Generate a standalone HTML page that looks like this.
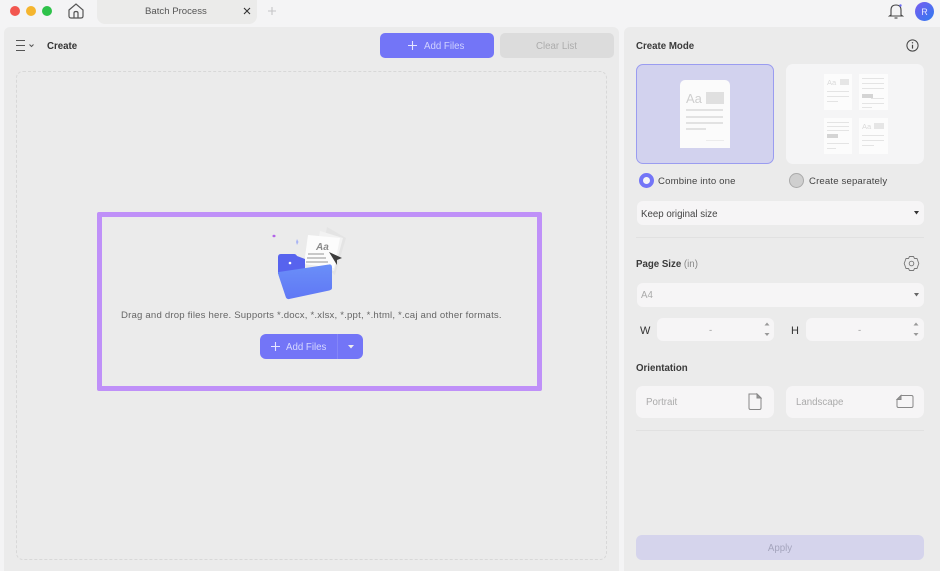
<!DOCTYPE html>
<html><head><meta charset="utf-8"><style>
*{box-sizing:border-box}
html,body{margin:0;padding:0;width:940px;height:571px;overflow:hidden;background:#f4f4f5;font-family:"Liberation Sans",sans-serif;color:#333}
#w{position:absolute;left:0;top:0;width:940px;height:571px;filter:blur(.3px)}
.a{position:absolute}
.t{position:absolute;white-space:nowrap;line-height:14px;margin-top:1px}
.b{font-weight:bold}
.field{position:absolute;background:#f6f5f6;border-radius:6px}
</style></head><body><div id="w">
<!-- title bar -->
<div class="a" style="left:10px;top:6px;width:10px;height:10px;border-radius:50%;background:#f2564f"></div>
<div class="a" style="left:26px;top:6px;width:10px;height:10px;border-radius:50%;background:#f5b52e"></div>
<div class="a" style="left:42px;top:6px;width:10px;height:10px;border-radius:50%;background:#2ec24a"></div>
<svg class="a" style="left:67px;top:2px" width="18" height="18" viewBox="0 0 18 18" fill="none" stroke="#555" stroke-width="1.2"><path d="M2 8 L9 2 L16 8 V14 Q16 16 14 16 H4 Q2 16 2 14 Z"/><path d="M7 16 V11 Q7 9.5 9 9.5 Q11 9.5 11 11 V16"/></svg>
<div class="a" style="left:97px;top:0;width:160px;height:24px;background:#ebebea;border-radius:0 0 8px 8px"></div>
<div class="t" style="left:145px;top:4px;font-size:9.6px;color:#555">Batch Process</div>
<svg class="a" style="left:243px;top:7px" width="8" height="8" fill="none" stroke="#333" stroke-width="1.1"><path d="M1 1 L7 7 M7 1 L1 7"/></svg>
<svg class="a" style="left:267px;top:6px" width="10" height="10" fill="none" stroke="#c4c4c6" stroke-width="1.1"><path d="M5 1 V9 M1 5 H9"/></svg>
<svg class="a" style="left:888px;top:2px" width="16" height="18" viewBox="0 0 16 18" fill="none" stroke="#444" stroke-width="1.1"><path d="M3 13 V8 Q3 3 8 3 Q13 3 13 8 V13 L14.5 14 H1.5 Z"/><path d="M6.5 16 H9.5"/><circle cx="12.5" cy="3.5" r="1.2" fill="#6c6cf5" stroke="none"/></svg>
<div class="a" style="left:915px;top:2px;width:19px;height:19px;border-radius:50%;background:linear-gradient(135deg,#7a5cf0,#2f7bf0)"></div>
<div class="t" style="left:915px;top:4px;width:19px;text-align:center;font-size:9px;color:#e6e6ff">R</div>

<!-- left panel -->
<div class="a" style="left:4px;top:27px;width:615px;height:544px;background:#ebebeb;border-radius:6px 6px 0 0"></div>
<svg class="a" style="left:15px;top:39px" width="22" height="13" fill="none" stroke="#555" stroke-width="1.1"><path d="M1 1.5 H10 M1 6.5 H10 M1 11.5 H10"/><path d="M14.5 5.5 L16.5 7.5 L18.5 5.5" stroke-width="1"/></svg>
<div class="t b" style="left:47px;top:39px;font-size:9.7px;color:#333">Create</div>
<div class="a" style="left:380px;top:33px;width:114px;height:25px;background:#7375f7;border-radius:5px"></div>
<svg class="a" style="left:408px;top:41px" width="9" height="9" fill="none" stroke="#e6e6ff" stroke-width="1.1"><path d="M4.5 0 V9 M0 4.5 H9"/></svg>
<div class="t" style="left:424px;top:39px;font-size:9.7px;color:#d0d2ff">Add Files</div>
<div class="a" style="left:500px;top:33px;width:114px;height:25px;background:#dcdcdc;border-radius:5px"></div>
<div class="t" style="left:536px;top:39px;font-size:9.7px;color:#acacac">Clear List</div>
<div class="a" style="left:16px;top:71px;width:591px;height:489px;border:1px dashed #d8d8d8;border-radius:7px"></div>

<!-- highlighted box -->
<div class="a" style="left:97px;top:212px;width:445px;height:179px;border:5px solid #bf90f8;border-radius:2px"></div>
<svg class="a" style="left:270px;top:226px" width="90" height="76" viewBox="0 0 90 76">
<defs><linearGradient id="f" x1="0" y1="0" x2="0" y2="1"><stop offset="0" stop-color="#6a8ef8"/><stop offset="1" stop-color="#6078f5"/></linearGradient></defs>
<path d="M2 10 l2 -1.5 l2 1.5 l-2 1.5 Z" fill="#b05ee8"/>
<path d="M27 13 l1.5 3 l-1.5 3 l-1 -3 Z" fill="#a9b4f5"/>
<path d="M57 1 L76 12 L65 49 L50 38 Z" fill="#e4e4e4"/>
<path d="M50 5 L73 12 L64 45 L44 38 Z" fill="#f2f2f2"/>
<path d="M38 9 L70 12 L64 42 L34 38 Z" fill="#fcfcfc"/>
<text x="46" y="24" font-size="10" font-style="italic" font-weight="bold" fill="#8a8a8a" font-family="Liberation Sans">Aa</text>
<path d="M38 28 H54 M37 32 H56 M36 36 H58" stroke="#c8c8c8" stroke-width="2"/>
<path d="M59 26 L72 32 L67 34 L67 39 Z" fill="#3c3c3c"/>
<path d="M8 31 Q8 28 11 28 L24 28 Q26 28 27 30 L35 33 L35 48 L8 48 Z" fill="#5763ee"/>
<circle cx="20" cy="37" r="1.3" fill="#fff"/>
<path d="M9 47 L59 39.500 Q61 39 61 41 V62 Q61 63 59 63.500 L19 72 Q17 72.500 16.500 70 L9.500 49 Q9 47 9 47 Z" fill="url(#f)" stroke="url(#f)" stroke-width="2" stroke-linejoin="round"/>
</svg>
<div class="t" style="left:121px;top:308px;font-size:9.6px;letter-spacing:.19px;color:#666">Drag and drop files here. Supports *.docx, *.xlsx, *.ppt, *.html, *.caj and other formats.</div>
<div class="a" style="left:260px;top:334px;width:103px;height:25px;background:#7375f7;border-radius:6px"></div>
<div class="a" style="left:337px;top:334px;width:1px;height:25px;background:#8486f8"></div>
<svg class="a" style="left:271px;top:342px" width="9" height="9" fill="none" stroke="#e6e6ff" stroke-width="1.1"><path d="M4.5 0 V9 M0 4.5 H9"/></svg>
<div class="t" style="left:286px;top:340px;font-size:9.7px;color:#d6d8ff">Add Files</div>
<svg class="a" style="left:348px;top:345px" width="6" height="4"><path d="M0 0 H6 L3 3.5 Z" fill="#eee"/></svg>

<!-- right panel -->
<div class="a" style="left:624px;top:27px;width:316px;height:544px;background:#ebebeb;border-radius:6px 0 0 0"></div>
<div class="t b" style="left:636px;top:39px;font-size:9.7px;color:#3a3a3a">Create Mode</div>
<svg class="a" style="left:906px;top:39px" width="13" height="13" fill="none" stroke="#444" stroke-width="1"><circle cx="6.5" cy="6.5" r="5.6"/><path d="M6.5 5.8 V9.6" stroke-width="1.2"/><circle cx="6.5" cy="3.8" r=".7" fill="#444" stroke="none"/></svg>

<div class="a" style="left:636px;top:64px;width:138px;height:100px;background:#d2d2ee;border:1px solid #9a9cf0;border-radius:7px"></div>
<div class="a" style="left:680px;top:80px;width:50px;height:68px;background:#fbfbfb;border-radius:5px 5px 0 0"></div>
<div class="t" style="left:686px;top:91px;font-size:13px;color:#cfcfcf">Aa</div>
<div class="a" style="left:706px;top:92px;width:18px;height:12px;background:#e0e0e0"></div>
<div class="a" style="left:686px;top:109px;width:37px;height:2px;background:#e2e2e2"></div>
<div class="a" style="left:686px;top:116px;width:37px;height:2px;background:#e2e2e2"></div>
<div class="a" style="left:686px;top:122px;width:37px;height:2px;background:#e2e2e2"></div>
<div class="a" style="left:686px;top:128px;width:20px;height:2px;background:#e2e2e2"></div>
<div class="a" style="left:706px;top:140px;width:18px;height:1px;background:#ececec"></div>

<div class="a" style="left:786px;top:64px;width:138px;height:100px;background:#f5f5f6;border-radius:7px"></div>
<div class="a" style="left:824px;top:74px;width:28px;height:36px;background:#fcfcfc"></div>
<div class="a" style="left:859px;top:74px;width:29px;height:36px;background:#fcfcfc"></div>
<div class="a" style="left:824px;top:118px;width:28px;height:36px;background:#fcfcfc"></div>
<div class="a" style="left:859px;top:118px;width:29px;height:36px;background:#fcfcfc"></div>
<svg class="a" style="left:824px;top:74px" width="64" height="80" fill="none" stroke="#e4e4e4" stroke-width="1">
<path d="M3 17.5 H25 M3 22.5 H25 M3 27.5 H14"/>
<path d="M38 4.5 H60 M38 9.5 H60 M38 14.5 H60 M47 24.5 H60 M38 29.5 H60 M38 33.5 H48"/>
<path d="M3 48.5 H25 M3 52.5 H25 M3 56.5 H25 M3 69.5 H25 M3 74.5 H12"/>
<path d="M38 61.5 H60 M38 66.5 H60 M38 71.5 H50"/>
<rect x="16" y="5" width="9" height="6" fill="#e6e6e6" stroke="none"/>
<rect x="38" y="20" width="11" height="4" fill="#d4d4d4" stroke="none"/>
<rect x="3" y="60" width="11" height="4" fill="#d4d4d4" stroke="none"/>
<rect x="50" y="49" width="10" height="6" fill="#e6e6e6" stroke="none"/>
<text x="3" y="11" font-size="7.5" fill="#dadada" stroke="none" font-family="Liberation Sans">Aa</text>
<text x="38" y="55" font-size="7.5" fill="#dadada" stroke="none" font-family="Liberation Sans">Aa</text>
</svg>

<div class="a" style="left:639px;top:173px;width:15px;height:15px;border-radius:50%;border:4px solid #7375f7;background:#f5f5f8"></div>
<div class="t" style="left:658px;top:174px;font-size:9.6px;letter-spacing:.15px;color:#444">Combine into one</div>
<div class="a" style="left:789px;top:173px;width:15px;height:15px;border-radius:50%;border:1px solid #aaa;background:#cfcfcf"></div>
<div class="t" style="left:809px;top:174px;font-size:9.6px;letter-spacing:.15px;color:#444">Create separately</div>

<div class="field" style="left:637px;top:201px;width:287px;height:24px"></div>
<div class="t" style="left:641px;top:207px;font-size:9.7px;color:#444">Keep original size</div>
<svg class="a" style="left:914px;top:211px" width="5" height="4"><path d="M0 0 H5 L2.5 3.5 Z" fill="#333"/></svg>
<div class="a" style="left:636px;top:237px;width:288px;height:1px;background:#e1e1e1"></div>

<div class="t" style="left:636px;top:257px;font-size:9.7px;color:#888"><span class="b" style="color:#3a3a3a">Page Size</span> (in)</div>
<svg class="a" style="left:903px;top:255px" width="17" height="17" viewBox="0 0 17 17" fill="none" stroke="#777" stroke-width=".9"><path d="M6.5 1.5 H10.5 L11.5 3.5 L14 3.5 L15.8 8.5 L14 13.5 L11.5 13.5 L10.5 15.5 H6.5 L5.5 13.5 L3 13.5 L1.2 8.5 L3 3.5 L5.5 3.5 Z" stroke-linejoin="round"/><circle cx="8.5" cy="8.5" r="2.3"/></svg>
<div class="field" style="left:637px;top:283px;width:287px;height:24px"></div>
<div class="t" style="left:641px;top:288px;font-size:9.7px;color:#aaa">A4</div>
<svg class="a" style="left:914px;top:293px" width="5" height="4"><path d="M0 0 H5 L2.5 3.5 Z" fill="#666"/></svg>

<div class="t" style="left:640px;top:323px;font-size:11px;color:#333">W</div>
<div class="field" style="left:657px;top:318px;width:117px;height:23px"></div>
<div class="t" style="left:709px;top:323px;font-size:9.5px;color:#999">-</div>
<svg class="a" style="left:764px;top:322px" width="6" height="15"><path d="M3 0.5 L5.5 3.5 H0.5 Z M3 14 L5.5 11 H0.5 Z" fill="#999"/></svg>
<div class="t" style="left:791px;top:323px;font-size:11px;color:#333">H</div>
<div class="field" style="left:806px;top:318px;width:118px;height:23px"></div>
<div class="t" style="left:858px;top:323px;font-size:9.5px;color:#999">-</div>
<svg class="a" style="left:913px;top:322px" width="6" height="15"><path d="M3 0.5 L5.5 3.5 H0.5 Z M3 14 L5.5 11 H0.5 Z" fill="#999"/></svg>

<div class="t b" style="left:636px;top:361px;font-size:9.7px;color:#3a3a3a">Orientation</div>
<div class="field" style="left:636px;top:386px;width:138px;height:32px;border-radius:7px"></div>
<div class="t" style="left:646px;top:395px;font-size:9.7px;color:#aaa">Portrait</div>
<svg class="a" style="left:747px;top:393px" width="15" height="18" fill="none" stroke="#888" stroke-width="1"><path d="M2 1 H10 L14 5 V15 Q14 16.5 12.5 16.5 H3.5 Q2 16.5 2 15 Z"/><path d="M10 1 L14 5 H10 Z" fill="#999"/></svg>
<div class="field" style="left:786px;top:386px;width:138px;height:32px;border-radius:7px"></div>
<div class="t" style="left:796px;top:395px;font-size:9.7px;color:#aaa">Landscape</div>
<svg class="a" style="left:896px;top:394px" width="18" height="15" fill="none" stroke="#888" stroke-width="1"><path d="M5 1.5 H15.5 Q17 1.5 17 3 V12 Q17 13.5 15.5 13.5 H2.5 Q1 13.5 1 12 V5.5 Z"/><path d="M5 1.5 L1 5.5 H5 Z" fill="#999"/></svg>
<div class="a" style="left:636px;top:430px;width:288px;height:1px;background:#e1e1e1"></div>

<div class="a" style="left:636px;top:535px;width:288px;height:25px;background:#d5d4ec;border-radius:6px"></div>
<div class="t" style="left:636px;top:541px;width:288px;text-align:center;font-size:9.7px;color:#a5a5bd">Apply</div>
</div></body></html>
